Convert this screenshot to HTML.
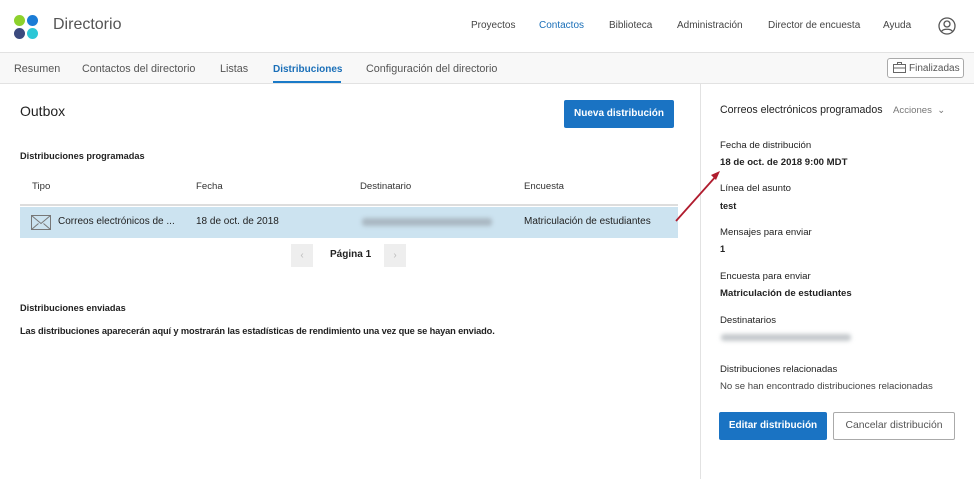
<!DOCTYPE html><html><head><style>
*{margin:0;padding:0;box-sizing:border-box}
body{width:974px;height:479px;position:relative;background:#fff;font-family:"Liberation Sans",sans-serif;color:#222;overflow:hidden;font-size:10px}
.a{position:absolute;white-space:nowrap}
.nav{font-size:10px;color:#444;top:20px}
.sub{font-size:10.8px;color:#555;top:63px}
.b{font-weight:bold}
.g{color:#333}
.dot{position:absolute;width:11px;height:11px;border-radius:50%}
.r{font-size:9.6px}
.rb{font-size:9.2px;font-weight:bold}
</style></head><body>
<div class="dot" style="left:14px;top:15px;background:#8dd12c"></div>
<div class="dot" style="left:27px;top:15px;background:#1b7cd6"></div>
<div class="dot" style="left:14px;top:28px;background:#3b4a7e"></div>
<div class="dot" style="left:27px;top:28px;background:#2cc7d6"></div>
<div class="a" style="left:53px;top:16px;font-size:16px;color:#555">Directorio</div>
<div class="a nav" style="left:471px">Proyectos</div>
<div class="a nav" style="left:539px;color:#1a6fb8">Contactos</div>
<div class="a nav" style="left:609px">Biblioteca</div>
<div class="a nav" style="left:677px">Administración</div>
<div class="a nav" style="left:768px">Director de encuesta</div>
<div class="a nav" style="left:883px">Ayuda</div>
<svg class="a" style="left:938px;top:17px" width="18" height="18" viewBox="0 0 18 18"><circle cx="9" cy="9" r="8" fill="none" stroke="#555" stroke-width="1.3"/><circle cx="9" cy="7" r="3" fill="none" stroke="#555" stroke-width="1.3"/><path d="M3.5 14.5c1.5-3 9.5-3 11 0" fill="none" stroke="#555" stroke-width="1.3"/></svg>
<div class="a" style="left:0;top:52px;width:974px;height:32px;background:#f8f8f8;border-top:1px solid #e2e2e2;border-bottom:1px solid #e2e2e2"></div>
<div class="a sub" style="left:14px">Resumen</div>
<div class="a sub" style="left:82px">Contactos del directorio</div>
<div class="a sub" style="left:220px">Listas</div>
<div class="a sub b" style="left:273px;color:#1a6fb8;font-size:10px;top:64px">Distribuciones</div>
<div class="a" style="left:273px;top:81px;width:68px;height:2px;background:#1a7ac8"></div>
<div class="a sub" style="left:366px">Configuración del directorio</div>
<div class="a" style="left:887px;top:58px;width:77px;height:20px;border:1px solid #aaa;border-radius:3px;background:#fff;font-size:10px;color:#555;padding:4px 0 0 21px">Finalizadas</div>
<svg class="a" style="left:893px;top:62px" width="13" height="11"><rect x="0.5" y="2.5" width="12" height="8" fill="none" stroke="#666"/><rect x="4.5" y="0.5" width="4" height="2" fill="none" stroke="#666"/><path d="M0.5 6h12" stroke="#666"/></svg>
<div class="a" style="left:700px;top:84px;width:1px;height:395px;background:#e2e2e2"></div>
<div class="a" style="left:20px;top:103px;font-size:14px">Outbox</div>
<div class="a" style="left:564px;top:100px;width:110px;height:28px;background:#1a73c3;border-radius:2px;color:#fff;font-weight:bold;font-size:10px;text-align:center;line-height:28px">Nueva distribución</div>
<div class="a rb" style="left:20px;top:151px">Distribuciones programadas</div>
<div class="a g r" style="left:32px;top:181px">Tipo</div>
<div class="a g r" style="left:196px;top:181px">Fecha</div>
<div class="a g r" style="left:360px;top:181px">Destinatario</div>
<div class="a g r" style="left:524px;top:181px">Encuesta</div>
<div class="a" style="left:20px;top:204px;width:658px;height:2px;background:#ddd"></div>
<div class="a" style="left:20px;top:207px;width:658px;height:31px;background:#cce3f0"></div>
<svg class="a" style="left:31px;top:215px" width="20" height="15"><rect x="0.5" y="0.5" width="19" height="14" fill="none" stroke="#777"/><path d="M0.5 0.5l9.5 8 9.5-8M0.5 14.5l7-6M19.5 14.5l-7-6" fill="none" stroke="#777"/></svg>
<div class="a" style="left:58px;top:216px;font-size:10px">Correos electrónicos de ...</div>
<div class="a" style="left:196px;top:216px;font-size:10px">18 de oct. de 2018</div>
<div class="a" style="left:362px;top:218px;width:130px;height:8px;background:#aab8c2;filter:blur(2px);border-radius:3px"></div>
<div class="a" style="left:524px;top:216px;font-size:10px">Matriculación de estudiantes</div>
<div class="a" style="left:291px;top:244px;width:22px;height:23px;background:#eee;color:#bbb;text-align:center;line-height:23px">‹</div>
<div class="a b" style="left:330px;top:249px;font-size:10px">Página 1</div>
<div class="a" style="left:384px;top:244px;width:22px;height:23px;background:#eee;color:#bbb;text-align:center;line-height:23px">›</div>
<div class="a rb" style="left:20px;top:303px">Distribuciones enviadas</div>
<div class="a rb" style="left:20px;top:326px;font-size:9.3px;letter-spacing:-0.15px">Las distribuciones aparecerán aquí y mostrarán las estadísticas de rendimiento una vez que se hayan enviado.</div>
<div class="a" style="left:720px;top:104px;font-size:10.6px">Correos electrónicos programados</div>
<div class="a" style="left:893px;top:105px;font-size:9.6px;color:#777">Acciones &nbsp;⌄</div>
<div class="a r" style="left:720px;top:140px">Fecha de distribución</div>
<div class="a rb" style="left:720px;top:157px;font-size:9.6px">18 de oct. de 2018 9:00 MDT</div>
<div class="a r" style="left:720px;top:183px">Línea del asunto</div>
<div class="a rb" style="left:720px;top:201px">test</div>
<div class="a r" style="left:720px;top:227px">Mensajes para enviar</div>
<div class="a rb" style="left:720px;top:244px">1</div>
<div class="a r" style="left:720px;top:271px">Encuesta para enviar</div>
<div class="a rb" style="left:720px;top:288px;font-size:9.6px">Matriculación de estudiantes</div>
<div class="a r" style="left:720px;top:315px">Destinatarios</div>
<div class="a" style="left:721px;top:334px;width:130px;height:7px;background:#c4c8cc;filter:blur(2px);border-radius:3px"></div>
<div class="a r" style="left:720px;top:364px">Distribuciones relacionadas</div>
<div class="a" style="left:720px;top:381px;font-size:9.6px;color:#444">No se han encontrado distribuciones relacionadas</div>
<div class="a" style="left:719px;top:412px;width:108px;height:28px;background:#1a73c3;border-radius:2px;color:#fff;font-weight:bold;font-size:10px;text-align:center;line-height:28px">Editar distribución</div>
<div class="a" style="left:833px;top:412px;width:122px;height:28px;border:1px solid #aaa;border-radius:2px;color:#555;font-size:10.4px;text-align:center;line-height:26px">Cancelar distribución</div>
<svg class="a" style="left:670px;top:165px" width="55" height="62"><path d="M6 56L47 10" stroke="#b01c2e" stroke-width="1.8"/><path d="M50 6l-9 4 5 5z" fill="#b01c2e"/></svg>
</body></html>
